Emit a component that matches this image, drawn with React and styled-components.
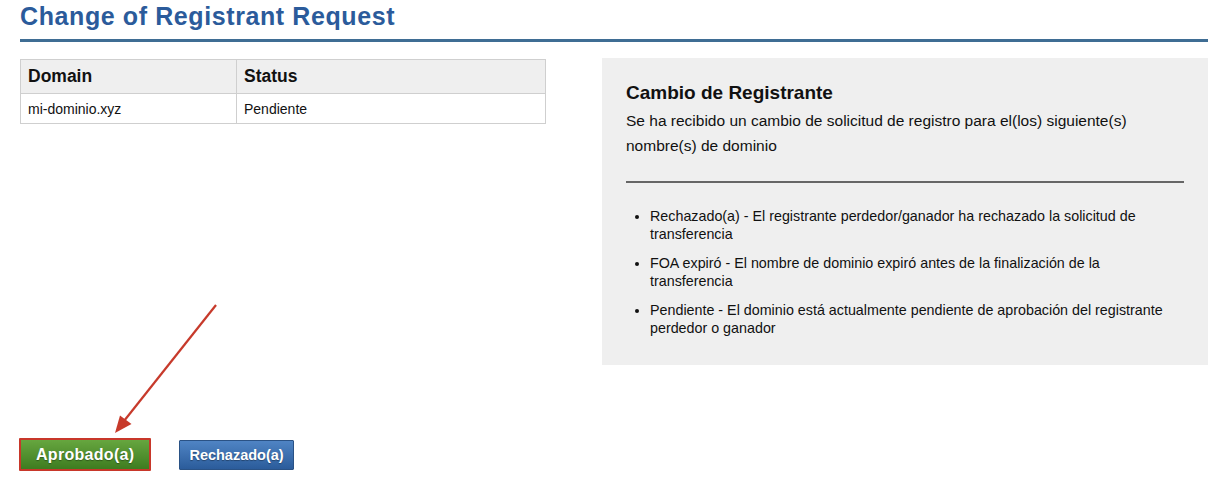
import React from "react";
import styled, { createGlobalStyle } from "styled-components";

const GlobalStyle = createGlobalStyle`
  body {
    margin: 0;
    background: #fff;
    font-family: "Liberation Sans", Arial, Helvetica, sans-serif;
    color: #111;
  }
`;

const Page = styled.div`
  position: relative;
  width: 1220px;
  height: 490px;
  box-sizing: border-box;
  padding: 0 12px 0 20px;
`;

const Title = styled.h1`
  margin: 0;
  padding: 2px 0 9px;
  font-size: 25px;
  letter-spacing: 0.6px;
  line-height: 28px;
  font-weight: bold;
  color: #2b5b9b;
  border-bottom: 3px solid #3f6d94;
`;

const Content = styled.div`
  display: flex;
  align-items: flex-start;
  margin-top: 16px;
`;

const Table = styled.table`
  width: 526px;
  border-collapse: collapse;
  margin-top: 1px;
`;

const Th = styled.th`
  text-align: left;
  font-size: 17.5px;
  font-weight: bold;
  height: 33px;
  padding: 0 7px;
  background: #efefef;
  border: 1px solid #cfcfcf;
  width: ${(props) => props.width || "auto"};
`;

const Td = styled.td`
  font-size: 14px;
  height: 29px;
  padding: 0 7px;
  border: 1px solid #cfcfcf;
`;

const Panel = styled.div`
  margin-left: 56px;
  width: 606px;
  box-sizing: border-box;
  background: #efefef;
  padding: 23px 24px 28px;
`;

const PanelTitle = styled.h2`
  margin: 0;
  font-size: 19px;
  line-height: 24px;
  font-weight: bold;
`;

const Lead = styled.p`
  margin: 3px 0 0;
  font-size: 15.5px;
  line-height: 25px;
`;

const Rule = styled.hr`
  margin: 23px 0 0;
  border: 0;
  height: 2px;
  background: #666;
`;

const List = styled.ul`
  margin: 24px 0 0;
  padding: 0 12px 0 24px;
  font-size: 14.3px;
  line-height: 18px;
`;

const Item = styled.li`
  margin-bottom: 11px;
  &:last-child {
    margin-bottom: 0;
  }
`;

const Actions = styled.div`
  display: flex;
  align-items: center;
  gap: 28px;
  margin-top: 73px;
  margin-left: -1px;
`;

const Button = styled.button`
  font-family: "Liberation Sans", Arial, Helvetica, sans-serif;
  font-weight: bold;
  color: #fff;
  cursor: pointer;
  text-shadow: 0 1px 1px rgba(0, 0, 0, 0.35);
  border-radius: 1px;
  ${(props) =>
    props.primary
      ? `
    font-size: 16px;
    letter-spacing: 0.3px;
    height: 33px;
    padding: 0 15px;
    background: linear-gradient(#66a63f, #3e7c20);
    border: 2px solid #c8372a;
  `
      : `
    font-size: 14.5px;
    height: 30px;
    padding: 0 9px;
    background: linear-gradient(#4f84c4, #2b5c9b);
    border: 1px solid #2a5285;
  `}
`;

const Arrow = styled.svg`
  position: absolute;
  left: 0;
  top: 0;
  pointer-events: none;
`;

const statuses = [
  "Rechazado(a) - El registrante perdedor/ganador ha rechazado la solicitud de transferencia",
  "FOA expiró - El nombre de dominio expiró antes de la finalización de la transferencia",
  "Pendiente - El dominio está actualmente pendiente de aprobación del registrante perdedor o ganador",
];

export default function App() {
  return (
    <Page>
      <GlobalStyle />
      <Title>Change of Registrant Request</Title>
      <Content>
        <Table>
          <thead>
            <tr>
              <Th width="201px">Domain</Th>
              <Th>Status</Th>
            </tr>
          </thead>
          <tbody>
            <tr>
              <Td>mi-dominio.xyz</Td>
              <Td>Pendiente</Td>
            </tr>
          </tbody>
        </Table>
        <Panel>
          <PanelTitle>Cambio de Registrante</PanelTitle>
          <Lead>
            Se ha recibido un cambio de solicitud de registro para el(los) siguiente(s) nombre(s) de dominio
          </Lead>
          <Rule />
          <List>
            {statuses.map((s) => (
              <Item key={s}>{s}</Item>
            ))}
          </List>
        </Panel>
      </Content>
      <Actions>
        <Button primary>Aprobado(a)</Button>
        <Button>Rechazado(a)</Button>
      </Actions>
      <Arrow width="1220" height="490" viewBox="0 0 1220 490">
        <line x1="216" y1="305" x2="124" y2="421" stroke="#c73a2b" strokeWidth="2.2" />
        <polygon points="115,433 131.5,424 120,415.5" fill="#c73a2b" />
      </Arrow>
    </Page>
  );
}
